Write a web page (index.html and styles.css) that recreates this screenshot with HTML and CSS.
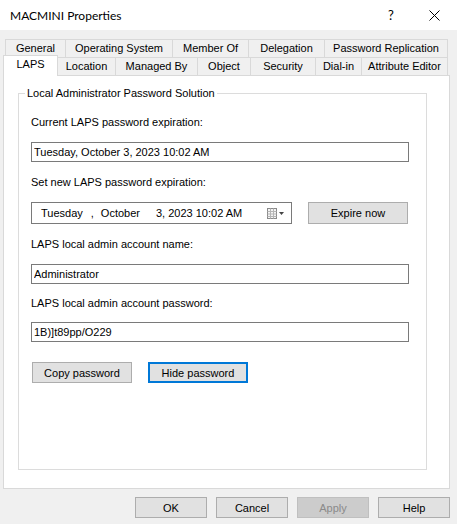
FILE: index.html
```html
<!DOCTYPE html>
<html lang="en">

<head>
    <meta charset="UTF-8">
    <meta name="viewport" content="width=device-width, initial-scale=1.0">
    <title>MACMINI Properties</title>
    <link rel="stylesheet" href="styles.css">
</head>

<body>
    <div class="dialog">
        <div class="titlebar">
            <span class="title">MACMINI Properties</span>
            <span class="title-help">?</span>
            <span class="title-close">
                <svg width="11" height="11" viewBox="0 0 11 11">
                    <path d="M0.5 0.5 L10.5 10.5 M10.5 0.5 L0.5 10.5" stroke="#000" stroke-width="1" fill="none" />
                </svg>
            </span>
        </div>

        <div class="tabs">
            <div class="tab-row back">
                <span class="tab">General</span>
                <span class="tab">Operating System</span>
                <span class="tab">Member Of</span>
                <span class="tab">Delegation</span>
                <span class="tab">Password Replication</span>
            </div>
            <div class="tab-row front">
                <span class="tab active">LAPS</span>
                <span class="tab">Location</span>
                <span class="tab">Managed By</span>
                <span class="tab">Object</span>
                <span class="tab">Security</span>
                <span class="tab">Dial-in</span>
                <span class="tab">Attribute Editor</span>
            </div>
        </div>

        <div class="panel">
            <fieldset class="group">
                <legend>Local Administrator Password Solution</legend>

                <label class="field-label first">Current LAPS password expiration:</label>
                <input class="textbox" type="text" value="Tuesday, October 3, 2023 10:02 AM" readonly>

                <label class="field-label">Set new LAPS password expiration:</label>
                <div class="date-row">
                    <div class="datepicker">
                        <span class="dp-day">Tuesday</span>
                        <span class="dp-sep">,</span>
                        <span class="dp-month">October</span>
                        <span class="dp-rest">3, 2023 10:02 AM</span>
                        <svg class="dp-icon" width="18" height="11" viewBox="0 0 18 11">
                            <rect x="0.5" y="0.5" width="9" height="10" fill="#f4f4f4" stroke="#8a8a8a" />
                            <path d="M0.5 3.5 H9.5 M0.5 6 H9.5 M0.5 8.5 H9.5 M3.5 0.5 V10.5 M6.5 0.5 V10.5" stroke="#b5b5b5" stroke-width="1" />
                            <path d="M12 4 L17 4 L14.5 7 Z" fill="#444" />
                        </svg>
                    </div>
                    <button class="btn expire">Expire now</button>
                </div>

                <label class="field-label">LAPS local admin account name:</label>
                <input class="textbox" type="text" value="Administrator" readonly>

                <label class="field-label tight">LAPS local admin account password:</label>
                <input class="textbox" type="text" value="1B)]t89pp/O229" readonly>

                <div class="pw-actions">
                    <button class="btn">Copy password</button>
                    <button class="btn focused">Hide password</button>
                </div>
            </fieldset>
        </div>

        <div class="footer">
            <button class="btn wide">OK</button>
            <button class="btn wide">Cancel</button>
            <button class="btn wide" disabled>Apply</button>
            <button class="btn wide">Help</button>
        </div>
    </div>
</body>

</html>
```

FILE: styles.css
```css
body {
    margin: 0;
    padding: 0;
    font-family: "Liberation Sans", Arial, sans-serif;
    font-size: 11px;
    color: #000;
}

.dialog {
    width: 457px;
    height: 524px;
    background: #f0f0f0;
    overflow: hidden;
}

/* window caption */
.titlebar {
    height: 30px;
    background: #fff;
    display: flex;
    align-items: center;
}

.title {
    font-family: Lato, "Liberation Sans", sans-serif;
    font-size: 12px;
    padding-left: 10px;
    flex: 1;
}

.title-help {
    font-family: Lato, "Liberation Sans", sans-serif;
    font-size: 13px;
    width: 12px;
    margin-right: 29px;
}

.title-close {
    display: flex;
    margin-right: 17px;
}

/* tab strip, two rows; neighbouring tabs share a border */
.tabs {
    padding: 9px 9px 0 5px;
}

.tab-row {
    display: flex;
    height: 18px;
}

.tab {
    flex: none;
    box-sizing: border-box;
    height: 18px;
    margin-left: -1px;
    border: 1px solid #d9d9d9;
    border-bottom: none;
    background: #f0f0f0;
    text-align: center;
    line-height: 17px;
    white-space: nowrap;
}

.tab:first-child {
    margin-left: 0;
}

.back .tab:nth-child(1) { width: 61px; }
.back .tab:nth-child(2) { width: 108px; }
.back .tab:nth-child(3) { width: 77px; }
.back .tab:nth-child(4) { width: 77px; }
.back .tab:nth-child(5) { width: 124px; }

.front .tab:nth-child(1) { width: 55px; }
.front .tab:nth-child(2) { width: 59px; }
.front .tab:nth-child(3) { width: 83px; }
.front .tab:nth-child(4) { width: 54px; }
.front .tab:nth-child(5) { width: 66px; }
.front .tab:nth-child(6) { width: 47px; }
.front .tab:nth-child(7) { width: 87px; }

.tab.active {
    position: relative;
    z-index: 1;
    align-self: flex-start;
    height: 21px;
    margin: -2px 0 0 -2px;
    background: #fff;
}

/* page body */
.panel {
    height: 414px;
    box-sizing: border-box;
    margin: 0 7px 0 3px;
    border: 1px solid #d9d9d9;
    background: #fff;
    padding-top: 11px;
}

.group {
    box-sizing: border-box;
    height: 383px;
    margin: 0 22px 0 14px;
    padding: 0 17px 0 12px;
    border: 1px solid #dcdcdc;
    display: flex;
    flex-direction: column;
    align-items: flex-start;
}

.group legend {
    padding: 0 2px;
    margin-left: -6px;
    line-height: 13px;
}

.field-label {
    display: block;
    line-height: 13px;
    margin-top: 14px;
    margin-bottom: 13px;
}

.field-label.first {
    margin-top: 16px;
}

.field-label.tight {
    margin-top: 13px;
    margin-bottom: 12px;
}

.textbox {
    box-sizing: border-box;
    width: 378px;
    height: 20px;
    margin: 0;
    padding: 0 2px;
    border: 1px solid #7a7a7a;
    font-family: inherit;
    font-size: 11px;
    color: #000;
    outline: none;
}

.date-row {
    display: flex;
    gap: 16px;
    align-items: center;
}

.datepicker {
    box-sizing: border-box;
    width: 261px;
    height: 22px;
    border: 1px solid #7a7a7a;
    display: flex;
    align-items: center;
    padding-left: 9px;
}

.dp-sep {
    margin-left: 8px;
}

.dp-month {
    margin-left: 7px;
}

.dp-rest {
    margin-left: 16px;
}

.dp-icon {
    margin-left: auto;
    margin-right: 6px;
}

.btn {
    box-sizing: border-box;
    width: 100px;
    height: 21px;
    margin: 0;
    padding: 0;
    border: 1px solid #adadad;
    background: #e1e1e1;
    font-family: inherit;
    font-size: 11px;
    color: #000;
}

.btn.expire {
    height: 22px;
}

.btn.focused {
    border: 2px solid #0078d7;
}

.btn:disabled {
    background: #cccccc;
    border-color: #bfbfbf;
    color: #8a8a8a;
}

.pw-actions {
    display: flex;
    gap: 16px;
    margin-top: 20px;
    margin-left: 1px;
}

/* OK / Cancel / Apply / Help */
.footer {
    display: flex;
    justify-content: flex-end;
    gap: 9px;
    padding: 8px 7px 0 0;
}

.btn.wide {
    width: 72px;
}
```
